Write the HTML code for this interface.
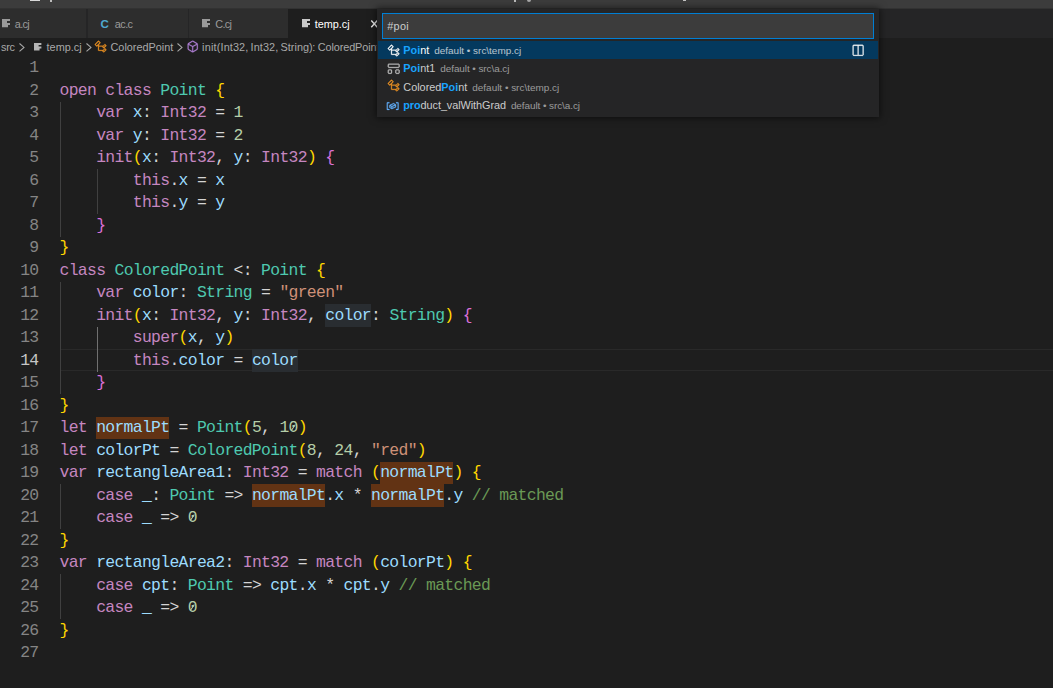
<!DOCTYPE html>
<html><head><meta charset="utf-8"><title>temp.cj</title>
<style>
html,body{margin:0;padding:0;}
body{width:1053px;height:688px;overflow:hidden;background:#1e1e1e;position:relative;font-family:"Liberation Sans",sans-serif;font-size:10.87px;color:#ccc;}
div,span{box-sizing:border-box;}
#title{position:absolute;left:0;top:0;width:1053px;height:8px;background:#3c3c3c;}
#title i{position:absolute;display:block;}
#tabs{position:absolute;left:0;top:9px;width:1053px;height:29px;background:#252526;}
.tab{position:absolute;top:0;height:29px;width:99.3px;background:#2d2d2d;color:#9b9b9b;}
.tab.act{background:#1e1e1e;color:#fff;}
.tab .lbl{position:absolute;top:1px;line-height:29px;left:27px;white-space:nowrap;}
#bc{position:absolute;left:0;top:38px;width:1053px;height:18.5px;background:#1e1e1e;color:#a9a9a9;white-space:nowrap;}
#bc span{position:absolute;top:0;line-height:18.5px;}
#bc b{font-weight:normal;}

svg.ic{stroke-width:.35;position:absolute;width:13.4px;height:13.4px;overflow:visible;}
svg.fi{position:absolute;width:9px;height:9px;overflow:visible;}
svg.ch{position:absolute;width:6px;height:9px;overflow:visible;}
.cico{position:absolute;font-weight:bold;font-size:11.6px;color:#4fa9d0;line-height:29px;top:0;}
/* editor */
.ln{position:absolute;margin-top:.5px;left:0;width:38.5px;text-align:right;height:22.5px;line-height:22.5px;font-family:"Liberation Mono",monospace;font-size:16.4px;letter-spacing:-0.676px;color:#858585;white-space:pre;}
.ln.cur{color:#c6c6c6;}
.cl{position:absolute;margin-top:.5px;left:59.5px;height:22.5px;line-height:22.5px;font-family:"Liberation Mono",monospace;font-size:16.4px;letter-spacing:-0.676px;color:#d4d4d4;white-space:pre;}
.k{color:#c586c0}.v{color:#9cdcfe}.t{color:#4ec9b0}.n{color:#b5cea8}.s{color:#ce9178}.c{color:#6a9955}.p{color:#d4d4d4}
.z{position:relative}.z::after{content:'';position:absolute;left:1.2px;top:8.8px;width:6.8px;height:1.15px;background:#b5cea8;transform:rotate(-56deg);}
.b1{color:#ffd700}.b2{color:#da70d6}.b3{color:#179fff}
.hw,.hb{position:absolute;height:22.5px}.hw{background:#292d31}.hb{background:#623314}
.ig{position:absolute;width:1px;background:#404040;}
.ig.iga{background:#707070;}
#curline{position:absolute;left:60px;top:349px;width:993px;height:22px;border-top:1px solid #292929;border-bottom:1px solid #292929;}
/* quick open */
#qo{position:absolute;left:377px;top:9px;width:502px;height:107.5px;background:#252526;box-shadow:0 0 7px 1px rgba(0,0,0,.55);color:#ccc;}
#qin{position:absolute;left:5px;top:4px;width:492px;height:25.5px;background:#3c3c3c;border:1px solid #007fd4;}
#qin span{letter-spacing:.35px;position:absolute;left:4.2px;top:.7px;line-height:23.5px;color:#ccc;}
.row{position:absolute;left:1px;width:499.6px;height:18.2px;line-height:18.2px;white-space:nowrap;}
.row.sel{background:#04395e;color:#fff;}
.row .lab{position:absolute;left:25.3px;top:0;}
.row .hl{color:#18a3ff;font-weight:bold;}
.row .desc{font-size:9.95px;opacity:.7;margin-left:5px;}
</style></head><body>
<svg width="0" height="0" style="position:absolute"><defs>
<path id="i-class" d="M11.34 9.71h.71l2.67-2.67v-.71L13.38 5h-.7l-1.82 1.81h-5V5.56l1.86-1.85V3l-2-2H5L1 5v.71l2 2h.71l1.14-1.15v5.79l.5.5H10v.52l1.33 1.34h.71l2.67-2.67v-.71L13.37 10h-.7l-1.86 1.85h-5v-4H10v.48l1.34 1.38zm1.69-3.65l.63.63-2 2-.63-.63 2-2zm0 5l.63.63-2 2-.63-.63 2-2zM3.35 6.65l-1.29-1.3 3.29-3.29 1.3 1.29-3.3 3.3z"/>
<path id="i-method" d="M13.51 4l-5-3h-1l-5 3-.49.86v6l.49.85 5 3h1l5-3 .49-.85v-6L13.51 4zm-6 9.56l-4.5-2.7V5.7l4.5 2.45v5.41zM3.27 4.7l4.74-2.84 4.74 2.84-4.74 2.59L3.27 4.7zm9.74 6.16l-4.5 2.7V8.15l4.5-2.45v5.16z"/>
<path id="i-struct" d="M2 2L1 3v3l1 1h12l1-1V3l-1-1H2zm0 1h12v3H2V3zm-1 7l1-1h3l1 1v3l-1 1H2l-1-1v-3zm2 0H2v3h3v-3H3zm7 0l1-1h3l1 1v3l-1 1h-3l-1-1v-3zm2 0h-1v3h3v-3h-2z"/>
<path id="i-var" d="M2 5h2V4H1.5l-.5.5v8l.5.5H4v-1H2V5zm12.5-1H12v1h2v7h-2v1h2.5l.5-.5v-8l-.5-.5zm-2.74 2.57L12 7v2.51l-.3.45-4.5 2h-.46l-2.5-1.5-.24-.43v-2.5l.3-.46 4.5-2h.46l2.5 1.5zM5 9.71l1.5.9V9.28L5 8.38v1.33zm.58-2.15l1.45.87 3.39-1.5-1.45-.87-3.39 1.5zm1.95 3.17l3.5-1.56v-1.4l-3.5 1.55v1.41z"/>
<path id="i-split" d="M14 1H3L2 2v11l1 1h11l1-1V2l-1-1zM8 13H3V2h5v11zm6 0H9V2h5v11z"/>
<path id="i-file" d="M0 0h8v2.1h-3v1.8h3v2.2h-2v2.1h-6z"/>
<path id="i-chev" d="M0.5 0.5L5.0 4.45L0.5 8.4" fill="none" stroke-width="1.05"/>
</defs></svg>
<div id="title"><i style="left:30px;top:0;width:10px;height:1px;background:#d8d8d8"></i><i style="left:50px;top:0;width:2px;height:2px;background:#bdbdbd"></i><i style="left:514px;top:0;width:2px;height:2px;background:#b9b9b9"></i><i style="left:527px;top:0;width:4px;height:2px;background:#a8a8a8;border-radius:0 0 2px 2px"></i><i style="left:683px;top:0;width:3px;height:1px;background:#c4c4c4"></i></div>
<div style="position:absolute;left:0;top:8px;width:1053px;height:1px;background:#323232"></div>
<div id="tabs">
  <div class="tab" style="left:-12.9px"><svg class="fi" style="left:14.9px;top:9.8px" viewBox="0 0 9 9" fill="#9a9a9a"><use href="#i-file"/></svg><span class="lbl" style="left:27.7px;letter-spacing:-0.7px">a.cj</span></div>
  <div class="tab" style="left:88.4px"><span class="cico" style="left:12px">C</span><span class="lbl" style="left:26.4px;letter-spacing:-0.55px">ac.c</span></div>
  <div class="tab" style="left:188.7px"><svg class="fi" style="left:13.7px;top:9.8px" viewBox="0 0 9 9" fill="#9a9a9a"><use href="#i-file"/></svg><span class="lbl" style="left:26.5px;letter-spacing:-0.65px">C.cj</span></div>
  <div class="tab act" style="left:288px;width:100px"><svg class="fi" style="left:14.2px;top:9.8px" viewBox="0 0 9 9" fill="#c8c8c8"><use href="#i-file"/></svg><span class="lbl" style="left:26.7px">temp.cj</span>
    <svg style="position:absolute;left:82.9px;top:11px;width:7px;height:8px;overflow:visible" viewBox="0 0 7 8"><path d="M0.3 0.5L6.3 7.3M6.3 0.5L0.3 7.3" stroke="#f0f0f0" stroke-width="1.35" fill="none"/></svg></div>
</div>
<div id="bc">
  <span style="left:1px;letter-spacing:-0.3px">src</span>
  <svg class="ch" style="left:18.6px;top:5.1px" viewBox="0 0 6 9" stroke="#a9a9a9"><use href="#i-chev"/></svg>
  <svg class="fi" style="left:34px;top:5.2px;width:8.3px;height:8.3px" viewBox="0 0 9 9" fill="#b4b4b4"><use href="#i-file"/></svg>
  <span style="left:46.6px">temp.cj</span>
  <svg class="ch" style="left:86px;top:5.1px" viewBox="0 0 6 9" stroke="#a9a9a9"><use href="#i-chev"/></svg>
  <svg class="ic" style="left:94.2px;top:2.3px" viewBox="0 0 16 16" fill="#ec9122" stroke="#ec9122"><use href="#i-class"/></svg>
  <span style="left:110.5px">ColoredPoint</span>
  <svg class="ch" style="left:177.2px;top:5.1px" viewBox="0 0 6 9" stroke="#a9a9a9"><use href="#i-chev"/></svg>
  <svg class="ic" style="left:185.7px;top:1.8px" viewBox="0 0 16 16" fill="#b180d7" stroke="#b180d7" stroke-width=".15"><use href="#i-method"/></svg>
  <span style="left:202px"><b style="letter-spacing:.22px">init(</b><b style="letter-spacing:.1px">Int32</b><b style="letter-spacing:-.35px">, </b><b style="letter-spacing:.1px">Int32</b><b style="letter-spacing:-.35px">, </b>String<b style="letter-spacing:-.3px">): </b><b style="letter-spacing:-.1px">ColoredPoint</b></span>
</div>
<div id="editor">
<div id="curline"></div>
<div class="ig" style="left:60px;top:101.5px;height:135.0px"></div>
<div class="ig" style="left:97px;top:169.0px;height:45.0px"></div>
<div class="ig" style="left:60px;top:281.5px;height:112.5px"></div>
<div class="ig iga" style="left:97px;top:326.5px;height:45.0px"></div>
<div class="ig" style="left:60px;top:484.0px;height:45.0px"></div>
<div class="ig" style="left:60px;top:574.0px;height:45.0px"></div>
<div class="hw" style="left:325.3px;top:304.0px;width:45.8px"></div>
<div class="hw" style="left:251.9px;top:349.0px;width:45.8px"></div>
<div class="hb" style="left:96.2px;top:416.5px;width:73.3px"></div>
<div class="hb" style="left:380.2px;top:461.5px;width:73.3px"></div>
<div class="hb" style="left:251.9px;top:484.0px;width:73.3px"></div>
<div class="hb" style="left:371.1px;top:484.0px;width:73.3px"></div>
<div class="ln" style="top:56.5px">1</div>
<div class="ln" style="top:79.0px">2</div>
<div class="cl" style="top:79.0px"><span class="k">open class </span><span class="t">Point</span><span class="p"> </span><span class="b1">{</span></div>
<div class="ln" style="top:101.5px">3</div>
<div class="cl" style="top:101.5px"><span class="p">    </span><span class="k">var </span><span class="v">x</span><span class="p">: </span><span class="k">Int32</span><span class="p"> = </span><span class="n">1</span></div>
<div class="ln" style="top:124.0px">4</div>
<div class="cl" style="top:124.0px"><span class="p">    </span><span class="k">var </span><span class="v">y</span><span class="p">: </span><span class="k">Int32</span><span class="p"> = </span><span class="n">2</span></div>
<div class="ln" style="top:146.5px">5</div>
<div class="cl" style="top:146.5px"><span class="p">    </span><span class="k">init</span><span class="b1">(</span><span class="v">x</span><span class="p">: </span><span class="k">Int32</span><span class="p">, </span><span class="v">y</span><span class="p">: </span><span class="k">Int32</span><span class="b1">)</span><span class="p"> </span><span class="b2">{</span></div>
<div class="ln" style="top:169.0px">6</div>
<div class="cl" style="top:169.0px"><span class="p">        </span><span class="k">this</span><span class="p">.</span><span class="v">x</span><span class="p"> = </span><span class="v">x</span></div>
<div class="ln" style="top:191.5px">7</div>
<div class="cl" style="top:191.5px"><span class="p">        </span><span class="k">this</span><span class="p">.</span><span class="v">y</span><span class="p"> = </span><span class="v">y</span></div>
<div class="ln" style="top:214.0px">8</div>
<div class="cl" style="top:214.0px"><span class="p">    </span><span class="b2">}</span></div>
<div class="ln" style="top:236.5px">9</div>
<div class="cl" style="top:236.5px"><span class="b1">}</span></div>
<div class="ln" style="top:259.0px">10</div>
<div class="cl" style="top:259.0px"><span class="k">class </span><span class="t">ColoredPoint</span><span class="p"> &lt;: </span><span class="t">Point</span><span class="p"> </span><span class="b1">{</span></div>
<div class="ln" style="top:281.5px">11</div>
<div class="cl" style="top:281.5px"><span class="p">    </span><span class="k">var </span><span class="v">color</span><span class="p">: </span><span class="t">String</span><span class="p"> = </span><span class="s">"green"</span></div>
<div class="ln" style="top:304.0px">12</div>
<div class="cl" style="top:304.0px"><span class="p">    </span><span class="k">init</span><span class="b1">(</span><span class="v">x</span><span class="p">: </span><span class="k">Int32</span><span class="p">, </span><span class="v">y</span><span class="p">: </span><span class="k">Int32</span><span class="p">, </span><span class="v">color</span><span class="p">: </span><span class="t">String</span><span class="b1">)</span><span class="p"> </span><span class="b2">{</span></div>
<div class="ln" style="top:326.5px">13</div>
<div class="cl" style="top:326.5px"><span class="p">        </span><span class="k">super</span><span class="b1">(</span><span class="v">x</span><span class="p">, </span><span class="v">y</span><span class="b1">)</span></div>
<div class="ln cur" style="top:349.0px">14</div>
<div class="cl" style="top:349.0px"><span class="p">        </span><span class="k">this</span><span class="p">.</span><span class="v">color</span><span class="p"> = </span><span class="v">color</span></div>
<div class="ln" style="top:371.5px">15</div>
<div class="cl" style="top:371.5px"><span class="p">    </span><span class="b2">}</span></div>
<div class="ln" style="top:394.0px">16</div>
<div class="cl" style="top:394.0px"><span class="b1">}</span></div>
<div class="ln" style="top:416.5px">17</div>
<div class="cl" style="top:416.5px"><span class="k">let </span><span class="v">normalPt</span><span class="p"> = </span><span class="t">Point</span><span class="b1">(</span><span class="n">5</span><span class="p">, </span><span class="n">1<span class="z">0</span></span><span class="b1">)</span></div>
<div class="ln" style="top:439.0px">18</div>
<div class="cl" style="top:439.0px"><span class="k">let </span><span class="v">colorPt</span><span class="p"> = </span><span class="t">ColoredPoint</span><span class="b1">(</span><span class="n">8</span><span class="p">, </span><span class="n">24</span><span class="p">, </span><span class="s">"red"</span><span class="b1">)</span></div>
<div class="ln" style="top:461.5px">19</div>
<div class="cl" style="top:461.5px"><span class="k">var </span><span class="v">rectangleArea1</span><span class="p">: </span><span class="k">Int32</span><span class="p"> = </span><span class="k">match</span><span class="p"> </span><span class="b1">(</span><span class="v">normalPt</span><span class="b1">)</span><span class="p"> </span><span class="b1">{</span></div>
<div class="ln" style="top:484.0px">20</div>
<div class="cl" style="top:484.0px"><span class="p">    </span><span class="k">case </span><span class="v">_</span><span class="p">: </span><span class="t">Point</span><span class="p"> =&gt; </span><span class="v">normalPt</span><span class="p">.</span><span class="v">x</span><span class="p"> * </span><span class="v">normalPt</span><span class="p">.</span><span class="v">y</span><span class="p"> </span><span class="c">// matched</span></div>
<div class="ln" style="top:506.5px">21</div>
<div class="cl" style="top:506.5px"><span class="p">    </span><span class="k">case </span><span class="v">_</span><span class="p"> =&gt; </span><span class="n"><span class="z">0</span></span></div>
<div class="ln" style="top:529.0px">22</div>
<div class="cl" style="top:529.0px"><span class="b1">}</span></div>
<div class="ln" style="top:551.5px">23</div>
<div class="cl" style="top:551.5px"><span class="k">var </span><span class="v">rectangleArea2</span><span class="p">: </span><span class="k">Int32</span><span class="p"> = </span><span class="k">match</span><span class="p"> </span><span class="b1">(</span><span class="v">colorPt</span><span class="b1">)</span><span class="p"> </span><span class="b1">{</span></div>
<div class="ln" style="top:574.0px">24</div>
<div class="cl" style="top:574.0px"><span class="p">    </span><span class="k">case </span><span class="v">cpt</span><span class="p">: </span><span class="t">Point</span><span class="p"> =&gt; </span><span class="v">cpt</span><span class="p">.</span><span class="v">x</span><span class="p"> * </span><span class="v">cpt</span><span class="p">.</span><span class="v">y</span><span class="p"> </span><span class="c">// matched</span></div>
<div class="ln" style="top:596.5px">25</div>
<div class="cl" style="top:596.5px"><span class="p">    </span><span class="k">case </span><span class="v">_</span><span class="p"> =&gt; </span><span class="n"><span class="z">0</span></span></div>
<div class="ln" style="top:619.0px">26</div>
<div class="cl" style="top:619.0px"><span class="b1">}</span></div>
<div class="ln" style="top:641.5px">27</div>
</div>
<div id="qo">
  <div id="qin"><span>#poi</span></div>
  <div class="row sel" style="top:31.9px"><svg class="ic" style="left:8.7px;top:2.7px" viewBox="0 0 16 16" fill="#fff" stroke="#fff"><use href="#i-class"/></svg><span class="lab"><span class="hl">Poi</span>nt<span class="desc">default • src&#92;temp.cj</span></span>
    <svg class="ic" style="left:473.3px;top:3px" viewBox="0 0 16 16" fill="#fff" stroke="#fff"><use href="#i-split"/></svg></div>
  <div class="row" style="top:50.1px"><svg class="ic" style="left:8.9px;top:3.2px" viewBox="0 0 16 16" fill="#c5c5c5" stroke="#c5c5c5"><use href="#i-struct"/></svg><span class="lab"><span class="hl">Poi</span>nt1<span class="desc" style="letter-spacing:-0.07px">default • src&#92;a.cj</span></span></div>
  <div class="row" style="top:68.3px"><svg class="ic" style="left:8.7px;top:2.2px" viewBox="0 0 16 16" fill="#ec9122" stroke="#ec9122"><use href="#i-class"/></svg><span class="lab" style="top:.7px">Colored<span class="hl">Poi</span>nt<span class="desc">default • src&#92;temp.cj</span></span></div>
  <div class="row" style="top:86.5px"><svg class="ic" style="left:8.1px;top:3.6px" viewBox="0 0 16 16" fill="#62b0fa" stroke="#62b0fa"><use href="#i-var"/></svg><span class="lab" style="letter-spacing:-0.065px"><span class="hl">pro</span>duct_valWithGrad<span class="desc" style="letter-spacing:-0.07px">default • src&#92;a.cj</span></span></div>
</div>
</body></html>
